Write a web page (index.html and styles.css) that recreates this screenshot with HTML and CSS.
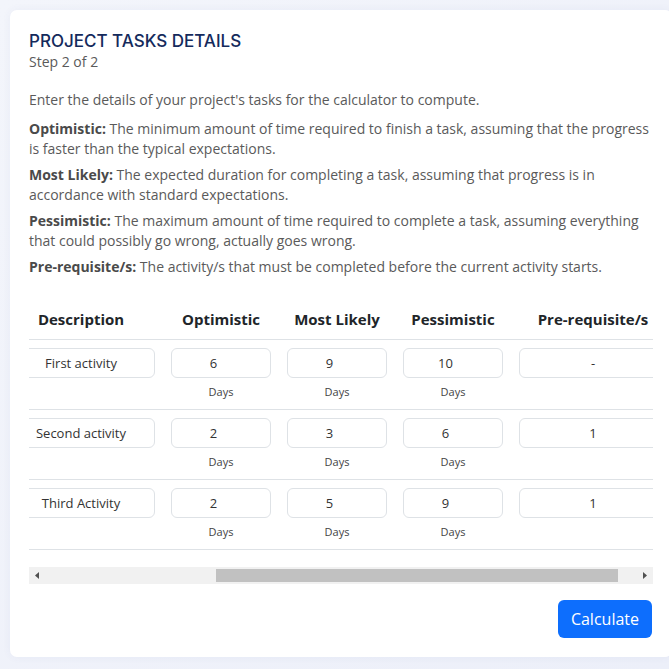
FILE: index.html
```html
<!DOCTYPE html>
<html lang="en">
<head>
<meta charset="utf-8">
<title>Project Tasks Details</title>
<link rel="stylesheet" href="styles.css">
</head>
<body>
<main class="card">
  <h1 class="title">PROJECT TASKS DETAILS</h1>
  <p class="step">Step 2 of 2</p>
  <p class="intro">Enter the details of your project's tasks for the calculator to compute.</p>
  <p class="def"><b>Optimistic:</b> The minimum amount of time required to finish a task, assuming that the progress is faster than the typical expectations.</p>
  <p class="def"><b>Most Likely:</b> The expected duration for completing a task, assuming that progress is in accordance with standard expectations.</p>
  <p class="def"><b>Pessimistic:</b> The maximum amount of time required to complete a task, assuming everything that could possibly go wrong, actually goes wrong.</p>
  <p class="def"><b>Pre-requisite/s:</b> The activity/s that must be completed before the current activity starts.</p>

  <div class="table-wrap" id="tableWrap">
    <table class="tasks">
      <thead>
        <tr>
          <th><div class="no">Activity No.</div></th>
          <th>Description</th>
          <th>Optimistic</th>
          <th>Most Likely</th>
          <th>Pessimistic</th>
          <th>Pre-requisite/s</th>
          <th class="spacer"></th>
        </tr>
      </thead>
      <tbody>
        <tr>
          <td><div class="no">1</div></td>
          <td><input class="field wide" type="text" value="First activity"></td>
          <td><input class="field" type="number" value="6"><div class="unit">Days</div></td>
          <td><input class="field" type="number" value="9"><div class="unit">Days</div></td>
          <td><input class="field" type="number" value="10"><div class="unit">Days</div></td>
          <td><input class="field wide" type="text" value="-"></td>
          <td class="spacer"></td>
        </tr>
        <tr>
          <td><div class="no">2</div></td>
          <td><input class="field wide" type="text" value="Second activity"></td>
          <td><input class="field" type="number" value="2"><div class="unit">Days</div></td>
          <td><input class="field" type="number" value="3"><div class="unit">Days</div></td>
          <td><input class="field" type="number" value="6"><div class="unit">Days</div></td>
          <td><input class="field wide" type="text" value="1"></td>
          <td class="spacer"></td>
        </tr>
        <tr>
          <td><div class="no">3</div></td>
          <td><input class="field wide" type="text" value="Third Activity"></td>
          <td><input class="field" type="number" value="2"><div class="unit">Days</div></td>
          <td><input class="field" type="number" value="5"><div class="unit">Days</div></td>
          <td><input class="field" type="number" value="9"><div class="unit">Days</div></td>
          <td><input class="field wide" type="text" value="1"></td>
          <td class="spacer"></td>
        </tr>
      </tbody>
    </table>
  </div>

  <div class="hscroll" aria-hidden="true">
    <span class="hs-btn">
      <svg width="16" height="17" viewBox="0 0 16 17"><polygon points="10,5 10,12 6,8.5" fill="#505050"/></svg>
    </span>
    <span class="hs-track"><span class="hs-thumb" style="margin-left:171px;width:402px"></span></span>
    <span class="hs-btn">
      <svg width="16" height="17" viewBox="0 0 16 17"><polygon points="6,5 6,12 10,8.5" fill="#505050"/></svg>
    </span>
  </div>

  <div class="actions">
    <button class="btn" type="button">Calculate</button>
  </div>
</main>
<script src="script.js"></script>
</body>
</html>
```

FILE: styles.css
```css
html, body {
  margin: 0;
  padding: 0;
  overflow: hidden;
}
body {
  background: linear-gradient(135deg, #f3f5fb 0%, #eceff9 100%);
  font-family: "Open Sans", "Noto Sans", Arial, sans-serif;
  color: #5a5a5a;
  min-height: 669px;
  padding: 10px 0 0 10px;
  box-sizing: border-box;
}
.card {
  width: 662px;
  box-sizing: border-box;
  background: #fff;
  border-radius: 7px;
  box-shadow: 0 0 8px rgba(60, 80, 160, 0.06);
  padding: 20px 19px 19px 19px;
}
.title {
  margin: 0;
  font-family: Inter, "Noto Sans", sans-serif;
  font-size: 17px;
  font-weight: 500;
  line-height: 22px;
  color: #142a5c;
}
.step {
  margin: 0;
  font-size: 14px;
  line-height: 20px;
  color: #5a5a5a;
}
.intro {
  margin: 18px 0 9px;
  font-size: 14px;
  line-height: 20px;
}
.def {
  margin: 0 0 6px;
  font-size: 14px;
  line-height: 20px;
}
.def b {
  color: #4a4a4a;
  font-weight: 700;
}
.table-wrap {
  margin-top: 24px;
  overflow-x: auto;
  padding-bottom: 17px;
  scrollbar-width: none;
}
.table-wrap::-webkit-scrollbar {
  display: none;
}
.tasks {
  border-collapse: collapse;
  white-space: nowrap;
}
.tasks th {
  font-size: 15px;
  font-weight: 700;
  color: #212529;
  line-height: 22px;
  padding: 7px 8px 9px;
  text-align: center;
  border-bottom: 1px solid #dee2e6;
}
.tasks td {
  padding: 8px 8px 9px;
  vertical-align: top;
  text-align: center;
  border-bottom: 1px solid #dee2e6;
}
.tasks .spacer {
  padding: 0;
  width: 5px;
  min-width: 5px;
}
.no {
  width: 220px;
  font-size: 14px;
  line-height: 30px;
}
th .no {
  line-height: 22px;
}
.field {
  display: block;
  box-sizing: border-box;
  width: 100px;
  height: 30px;
  margin: 0;
  padding: 0 6px;
  border: 1px solid #dee2e6;
  border-radius: 6px;
  font-family: "Open Sans", "Noto Sans", Arial, sans-serif;
  font-size: 13px;
  color: #333;
  text-align: center;
  background: #fff;
}
.field.wide {
  width: 148px;
}
.unit {
  margin-top: 6px;
  font-size: 11px;
  line-height: 16px;
  color: #444;
}
.hscroll {
  display: flex;
  height: 17px;
  background: #f1f1f1;
}
.hs-btn {
  flex: 0 0 16px;
  display: block;
}
.hs-btn svg {
  display: block;
}
.hs-track {
  flex: 1;
  display: flex;
  align-items: center;
}
.hs-thumb {
  display: block;
  height: 13px;
  background: #c1c1c1;
}
.actions {
  display: flex;
  justify-content: flex-end;
  margin-top: 16px;
  padding-right: 1px;
}
.btn {
  font-family: "Open Sans", "Noto Sans", Arial, sans-serif;
  font-size: 16px;
  line-height: 24px;
  padding: 7px 13px;
  color: #fff;
  background: #0d6efd;
  border: 0;
  border-radius: 6px;
}
```

FILE: script.js
```js
document.getElementById('tableWrap').scrollLeft = 266;
```
